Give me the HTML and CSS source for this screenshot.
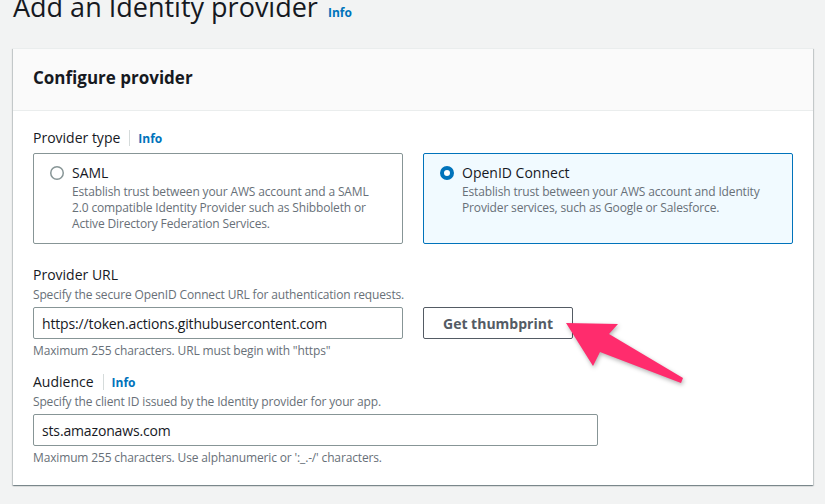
FILE: index.html
```html
<!DOCTYPE html>
<html lang="en">
<head>
  <meta charset="UTF-8" />
  <meta name="viewport" content="width=device-width, initial-scale=1.0" />
  <title>Add an Identity provider</title>
  <link rel="stylesheet" href="styles.css">
</head>
<body>

  <div class="page">
    <div class="page-header">
      <h1>Add an Identity provider</h1>
      <a class="info" href="#">Info</a>
    </div>

    <section class="panel">
      <div class="panel-header">
        <h2>Configure provider</h2>
      </div>

      <div class="panel-body">
        <div class="field field-type">
          <div class="label-row">
            <span class="label">Provider type</span>
            <span class="sep"></span>
            <a class="info" href="#">Info</a>
          </div>
          <div class="tiles">
            <label class="tile">
              <svg class="radio" width="14" height="14" viewBox="0 0 14 14">
                <circle cx="7" cy="7" r="6.25" fill="#fff" stroke="#879596" stroke-width="1.5" />
              </svg>
              <div class="tile-text">
                <div class="tile-title">SAML</div>
                <div class="tile-desc">Establish trust between your AWS account and a SAML 2.0 compatible Identity Provider such as Shibboleth or Active Directory Federation Services.</div>
              </div>
            </label>
            <label class="tile selected">
              <svg class="radio" width="14" height="14" viewBox="0 0 14 14">
                <circle cx="7" cy="7" r="5" fill="#fff" stroke="#0073bb" stroke-width="4" />
              </svg>
              <div class="tile-text">
                <div class="tile-title">OpenID Connect</div>
                <div class="tile-desc">Establish trust between your AWS account and Identity Provider services, such as Google or Salesforce.</div>
              </div>
            </label>
          </div>
        </div>

        <div class="field field-url">
          <div class="label-row">
            <span class="label">Provider URL</span>
          </div>
          <div class="desc">Specify the secure OpenID Connect URL for authentication requests.</div>
          <div class="url-row">
            <input class="text-input" type="text" value="https://token.actions.githubusercontent.com" />
            <div><button type="button">Get thumbprint</button></div>
          </div>
          <div class="hint">Maximum 255 characters. URL must begin with "https"</div>
        </div>

        <div class="field field-audience">
          <div class="label-row">
            <span class="label">Audience</span>
            <span class="sep"></span>
            <a class="info" href="#">Info</a>
          </div>
          <div class="desc">Specify the client ID issued by the Identity provider for your app.</div>
          <input class="text-input wide" type="text" value="sts.amazonaws.com" />
          <div class="hint">Maximum 255 characters. Use alphanumeric or ':_.-/' characters.</div>
        </div>
      </div>
    </section>

    <svg class="arrow" width="130" height="72" viewBox="560 328 130 72">
      <polygon points="566,333 618,334 609,344 683,388 681,393 600,362 593,376" fill="#ff2c6d" />
    </svg>
  </div>

</body>
</html>
```

FILE: styles.css
```css
* {
  box-sizing: border-box;
}

body {
  margin: 0;
  background: #f2f3f3;
  font-family: 'Open Sans', 'Liberation Sans', sans-serif;
  color: #16191f;
}

.page {
  position: relative;
  padding: 0 12px 20px 13px;
}

.page-header {
  display: flex;
  align-items: baseline;
  gap: 10px;
  margin-top: -10px;
}

.page-header h1 {
  margin: 0;
  font-size: 27px;
  font-weight: 400;
  line-height: 34px;
}

.info {
  color: #0073bb;
  font-size: 12px;
  font-weight: 700;
  text-decoration: none;
}

.panel {
  margin-top: 24px;
  background: #fff;
  border-top: 1px solid #eaeded;
  box-shadow: 0 1px 1px 0 rgba(0, 28, 36, 0.3), 1px 1px 1px 0 rgba(0, 28, 36, 0.15), -1px 1px 1px 0 rgba(0, 28, 36, 0.15);
}

.panel-header {
  background: #fafafa;
  border-bottom: 1px solid #eaeded;
  padding: 17px 20px 20px;
}

.panel-header h2 {
  margin: 0;
  font-size: 17px;
  font-weight: 700;
  line-height: 24px;
}

.panel-body {
  padding: 17px 20px 19px;
}

.label-row {
  display: flex;
  align-items: center;
  height: 20px;
}

.label {
  font-size: 14px;
  line-height: 20px;
}

.sep {
  width: 1px;
  height: 16px;
  background: #d5dbdb;
  margin: 0 8px 0 9px;
}

.tiles {
  display: grid;
  grid-template-columns: 370px 370px;
  gap: 20px;
  margin-top: 5px;
}

.tile {
  display: flex;
  gap: 8px;
  border: 1px solid #879596;
  border-radius: 2px;
  padding: 9px 16px 11px;
}

.tile.selected {
  border-color: #0073bb;
  background: #f1faff;
}

.radio {
  flex: none;
  margin-top: 3px;
}

.tile-title {
  font-size: 14px;
  line-height: 20px;
}

.tile-desc {
  margin-top: 1px;
  font-size: 12px;
  line-height: 16px;
  letter-spacing: -0.15px;
  color: #687078;
}

.field-url {
  margin-top: 21px;
}

.field-audience {
  margin-top: 13px;
}

.desc,
.hint {
  font-size: 12px;
  line-height: 16px;
  letter-spacing: -0.15px;
  color: #687078;
}

.desc {
  margin-top: 2px;
}

.url-row {
  display: grid;
  grid-template-columns: 370px 370px;
  gap: 20px;
  margin-top: 4px;
}

.text-input {
  display: block;
  width: 370px;
  height: 32px;
  padding: 0 8px;
  border: 1px solid #879596;
  border-radius: 2px;
  font-family: inherit;
  font-size: 14px;
  letter-spacing: -0.15px;
  color: #16191f;
  background: #fff;
}

.field-audience .text-input {
  margin-top: 4px;
}

.text-input.wide {
  width: 565px;
}

button {
  height: 32px;
  padding: 0 19px;
  background: #fff;
  border: 1px solid #545b64;
  border-radius: 2px;
  font-family: inherit;
  font-size: 14px;
  font-weight: 700;
  color: #545b64;
}

.hint {
  margin-top: 4px;
}

.arrow {
  position: absolute;
  left: 560px;
  top: 328px;
  filter: drop-shadow(1px 2px 2px rgba(0, 0, 0, 0.3));
}
```
